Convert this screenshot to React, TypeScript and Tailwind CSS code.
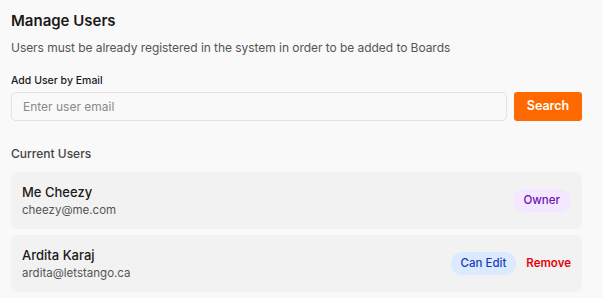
import React from "react";

const users = [
  { name: "Me Cheezy", email: "cheezy@me.com", role: "owner" },
  { name: "Ardita Karaj", email: "ardita@letstango.ca", role: "editor" },
];

export default function App() {
  return (
    <div
      className="min-h-screen bg-[#f9f9f9] px-[11px] pt-[10px] text-[#1a1a1a]"
      style={{ fontFamily: "Inter, 'Noto Sans', sans-serif" }}
    >
      <div className="w-[571px]">
        <h2 className="text-[15px] font-semibold leading-[22px]">Manage Users</h2>
        <p className="mt-[7px] text-[12px] leading-[18px] tracking-[-0.05px] text-[#555]">
          Users must be already registered in the system in order to be added to Boards
        </p>

        <label className="mt-[17px] block text-[10.5px] font-medium leading-[14px] text-[#1a1a1a]">
          Add User by Email
        </label>
        <div className="mt-[4px] flex gap-[7px]">
          <input
            type="email"
            placeholder="Enter user email"
            className="h-[29px] flex-1 rounded-[5px] border border-[#e2e2e2] bg-[#f9f9f9] px-[11px] text-[12px] outline-none placeholder:text-[#8a8a8a]"
          />
          <button className="h-[29px] w-[68px] rounded-[3px] bg-orange-500 text-[12.5px] font-semibold text-white">
            Search
          </button>
        </div>

        <h3 className="mt-[24px] text-[12px] font-medium leading-[18px] text-[#444]">Current Users</h3>
        <div className="mt-[9px] flex flex-col gap-[6px]">
          {users.map((u) => (
            <div
              key={u.email}
              className="flex h-[57px] items-center justify-between rounded-[7px] bg-[#f2f2f2] px-[11px]"
            >
              <div>
                <div className="text-[13px] font-medium leading-[19px] text-[#1a1a1a]">{u.name}</div>
                <div className="text-[11.5px] leading-[17px] text-[#555]">{u.email}</div>
              </div>
              <div className="flex items-center gap-[10px]">
                {u.role === "owner" ? (
                  <span className="flex h-[23px] items-center rounded-full bg-purple-100 px-[11px] text-[11.5px] font-medium text-purple-800">
                    Owner
                  </span>
                ) : (
                  <>
                    <span className="flex h-[23px] items-center rounded-full bg-blue-100 px-[10px] text-[11.5px] font-medium text-blue-800">
                      Can Edit
                    </span>
                    <button className="text-[11.5px] font-semibold text-red-600">Remove</button>
                  </>
                )}
              </div>
            </div>
          ))}
        </div>
      </div>
    </div>
  );
}
